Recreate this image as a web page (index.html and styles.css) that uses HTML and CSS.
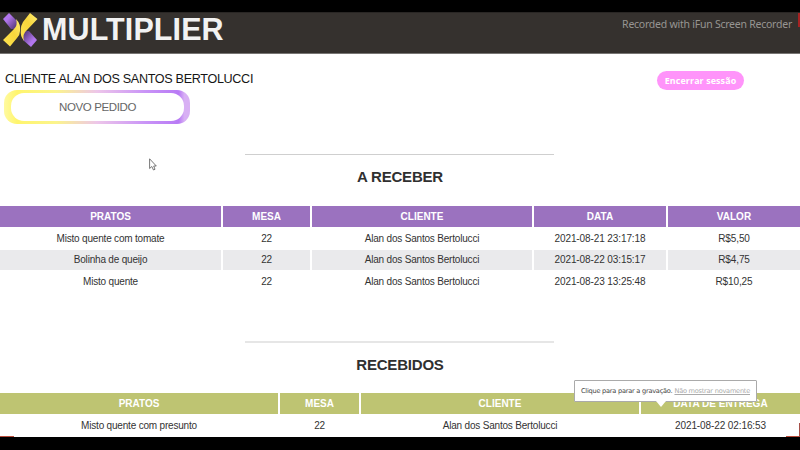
FILE: index.html
```html
<!DOCTYPE html>
<html lang="pt-BR">
<head>
<meta charset="utf-8">
<title>Multiplier</title>
<link rel="stylesheet" href="styles.css">
</head>
<body>
<div class="screen">
  <header class="header">
    <svg class="logo" viewBox="0 0 34 34">
      <defs>
        <linearGradient id="gold" x1="0" y1="1" x2="1" y2="0"><stop offset="0" stop-color="#ffe552"/><stop offset=".55" stop-color="#f8d63b"/><stop offset="1" stop-color="#ffee78"/></linearGradient>
        <linearGradient id="violetTop" x1="0" y1="0" x2="1" y2="1"><stop offset=".35" stop-color="#b276ee"/><stop offset="1" stop-color="#493268"/></linearGradient>
        <linearGradient id="violetBottom" x1="1" y1="1" x2="0" y2="0"><stop offset=".35" stop-color="#b276ee"/><stop offset="1" stop-color="#493268"/></linearGradient>
      </defs>
      <path fill="url(#violetTop)" d="M0 6 6 0 14 8 14 16 8 16Z"/>
      <path fill="url(#violetBottom)" d="M34 27 28 34 20 27 20 18 26 18Z"/>
      <path fill="url(#gold)" d="M13 6Q18 11 17 18Q17 22 14 25L7 33.5 0 27 11 16Q15 12 13 6Z"/>
      <path fill="url(#gold)" d="M27 0 34.5 6 24 17Q19 21 21 28Q17 23 17.8 17Q18 12 20 9Z"/>
    </svg>
    <h1 class="brand">MULTIPLIER</h1>
    <span class="recorder">Recorded with iFun Screen Recorder</span>
    <i class="record-mark"></i>
  </header>
  <main class="content">
    <section class="account">
      <div class="client">
        <p class="client-name">CLIENTE ALAN DOS SANTOS BERTOLUCCI</p>
        <button class="new-order"><span>NOVO PEDIDO</span></button>
      </div>
      <button class="logout">Encerrar sessão</button>
    </section>
    <hr class="rule">
    <h2 class="title">A RECEBER</h2>
    <div class="table pending">
      <div class="row head"><b>PRATOS</b><b>MESA</b><b>CLIENTE</b><b>DATA</b><b>VALOR</b></div>
      <div class="row"><span>Misto quente com tomate</span><span>22</span><span>Alan dos Santos Bertolucci</span><span class="date">2021-08-21 23:17:18</span><span class="date">R$5,50</span></div>
      <div class="row striped"><span>Bolinha de queijo</span><span>22</span><span>Alan dos Santos Bertolucci</span><span class="date">2021-08-22 03:15:17</span><span class="date">R$4,75</span></div>
      <div class="row"><span>Misto quente</span><span>22</span><span>Alan dos Santos Bertolucci</span><span class="date">2021-08-23 13:25:48</span><span class="date">R$10,25</span></div>
    </div>
    <hr class="rule second">
    <h2 class="title">RECEBIDOS</h2>
    <div class="table received">
      <div class="row head"><b>PRATOS</b><b>MESA</b><b>CLIENTE</b><b>DATA DE ENTREGA</b></div>
      <div class="row"><span>Misto quente com presunto</span><span>22</span><span>Alan dos Santos Bertolucci</span><span class="date">2021-08-22 02:16:53</span></div>
    </div>
  </main>
  <svg class="cursor" viewBox="0 0 8 13"><path d="M.6 .8V10.5L2.8 8.5 4.5 12 6 11.3 4.7 8H7.3Z" fill="#fff" stroke="#555" stroke-width=".8"/></svg>
  <div class="tooltip"><span>Clique para parar a gravação.</span><u>Não mostrar novamente</u></div>
  <i class="corner left"></i><i class="corner right"></i>
</div>
</body>
</html>
```
FILE: styles.css
```css
* { box-sizing: border-box; }
body { margin: 0; background: #000; font-family: "Liberation Sans", Arial, sans-serif; color: #333; }
.screen { position: relative; width: 800px; height: 450px; overflow: hidden; border-top: 12px solid #000; border-bottom: 13px solid #000; background: #fff; }
.header { position: relative; display: flex; height: 42px; background: #35312e; border-top: 1px solid #292624; border-bottom: 1px solid #777573; }
.logo { width: 34px; height: 34px; margin-left: 3px; overflow: visible; }
.brand { margin: 0 0 0 5px; font-size: 30.5px; line-height: 32px; color: #f2f2f2; letter-spacing: .1px; white-space: nowrap; }
.recorder { margin: 4px 8px 0 auto; font: 10.5px/15px "Noto Sans", sans-serif; color: #979592; letter-spacing: -.24px; white-space: nowrap; }
.record-mark { position: absolute; right: 0; top: 0; width: 2px; height: 14px; background: #a52222; }
.account { display: flex; justify-content: space-between; height: 100px; padding: 17px 56px 0 4px; }
.client-name { margin: 0 0 3px 1px; font-size: 12.6px; line-height: 16px; color: #161616; letter-spacing: -.32px; white-space: nowrap; }
button { border: 0; font-family: inherit; }
.new-order { display: block; width: 186px; height: 34px; padding: 3px 6px 3px 7px; border-radius: 13px; background: linear-gradient(90deg, #fffaa0 0, #fff56d 7%, #fbf48c 28%, #edc6e9 50%, #c994f7 76%, #b87af5 94%, #d8b0f4 97%); }
.new-order span { display: block; height: 28px; border-radius: 13px; background: #fff; font-size: 11.5px; line-height: 28px; color: #666; letter-spacing: -.38px; }
.logout { width: 87px; height: 19px; margin-top: 0; padding: 0; border-radius: 10px; background: #ff94fa; color: #fff; font: bold 8.9px/19px "Open Sans", sans-serif; letter-spacing: .12px; white-space: nowrap; }
.rule { width: 309px; height: 1px; margin: 0 0 0 245px; border: 0; background: #cfcfcf; }
.rule.second { height: 2px; margin-top: 49px; background: #e6e6e6; }
.title { margin: 0; height: 51px; padding-top: 12px; font-size: 15px; line-height: 20px; letter-spacing: -.2px; text-align: center; color: #303030; }
.second + .title { height: 50px; }
.row { display: grid; column-gap: 2px; height: 22px; line-height: 23px; font-size: 10px; letter-spacing: -.19px; text-align: center; white-space: nowrap; }
.date { letter-spacing: -.1px; }
.pending .row { grid-template-columns: 221px 87px 220px 132px 132px; }
.received .row { grid-template-columns: 278px 79px 278px 159px; }
.row.head { height: 21px; line-height: 21px; letter-spacing: 0; color: #fff; }
.pending .head b { background: #9b72bf; }
.received .head b { background: #bec472; }
.head + .row { height: 23px; line-height: 23px; }
.row.striped { height: 20px; line-height: 20px; }
.striped span { background: #eaeaec; }
.cursor { position: absolute; left: 149px; top: 146px; width: 8px; height: 13px; }
.tooltip { position: absolute; left: 574px; top: 368px; width: 183px; height: 22px; padding: 0 6px; display: flex; justify-content: space-between; border: 1px solid #aaa; border-radius: 1px; background: #fff; font: 6.6px/21px "DejaVu Sans", sans-serif; letter-spacing: -.24px; color: #444; white-space: nowrap; }
.tooltip u { color: #aaa; }
.tooltip::after { content: ""; position: absolute; left: 81px; top: 20px; border: 5px solid transparent; border-top: 6px solid #fff; border-bottom: 0; }
.corner { position: absolute; bottom: 0; height: 1px; background: #b94c3b; }
.corner.left { left: 0; width: 14px; }
.corner.right { right: 0; width: 14px; }
.corner.right::after { content: ""; position: absolute; right: 0; bottom: 0; width: 1px; height: 14px; background: #a55049; }
```
